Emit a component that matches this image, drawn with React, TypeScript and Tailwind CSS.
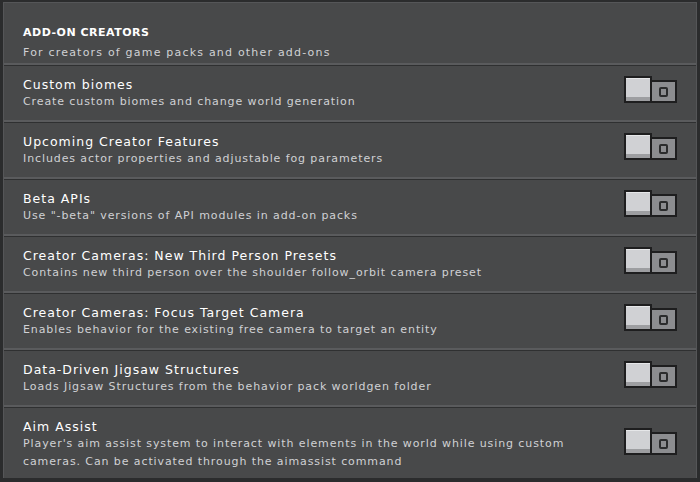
import React from "react";

interface Setting {
  title: string;
  desc: string[];
}

const SETTINGS: Setting[] = [
  { title: "Custom biomes", desc: ["Create custom biomes and change world generation"] },
  { title: "Upcoming Creator Features", desc: ["Includes actor properties and adjustable fog parameters"] },
  { title: "Beta APIs", desc: ['Use "-beta" versions of API modules in add-on packs'] },
  {
    title: "Creator Cameras: New Third Person Presets",
    desc: ["Contains new third person over the shoulder follow_orbit camera preset"],
  },
  {
    title: "Creator Cameras: Focus Target Camera",
    desc: ["Enables behavior for the existing free camera to target an entity"],
  },
  {
    title: "Data-Driven Jigsaw Structures",
    desc: ["Loads Jigsaw Structures from the behavior pack worldgen folder"],
  },
  {
    title: "Aim Assist",
    desc: [
      "Player's aim assist system to interact with elements in the world while using custom",
      "cameras. Can be activated through the aimassist command",
    ],
  },
];

function Toggle({ className }: { className: string }) {
  return (
    <div className={`flex items-start shrink-0 ${className}`}>
      {/* knob */}
      <div className="w-[28px] h-[27px] bg-[#1e1e1f] p-[2px]">
        <div className="w-full h-full bg-[#d0d1d4] border-t border-[#e6e7e9] border-b-[4px] border-b-[#9d9ea1]" />
      </div>
      {/* track */}
      <div className="w-[25px] h-[23px] mt-[4px] bg-[#1e1e1f] pt-[2px] pr-[2px] pb-[2px]">
        <div className="w-full h-full bg-[#8c8d90] flex items-center justify-center">
          <div className="w-[9px] h-[10px] border-2 border-[#2b2c2d] rounded-[2px]" />
        </div>
      </div>
    </div>
  );
}

function Divider() {
  return (
    <div>
      <div className="h-[2px] bg-[#5a5b5d]" />
      <div className="h-[1px] bg-[#2f3031]" />
    </div>
  );
}

export default function App() {
  return (
    <div
      className="w-[700px] h-[482px] bg-[#2b2c2d] pl-[3px] pr-[3px] pt-[2px] pb-[4px] overflow-hidden"
      style={{ fontFamily: '"DejaVu Sans", "Noto Sans", sans-serif' }}
    >
      <div className="h-full bg-[#48494a] border-l border-t border-r border-[#555658] flex flex-col">
        {/* Header */}
        <div className="h-[62px] px-[19px] pt-[23px]">
          <div className="text-[11px] leading-[14px] font-bold text-white tracking-[0.5px]">
            ADD-ON CREATORS
          </div>
          <div className="mt-[6px] text-[11px] leading-[14px] text-[#d0d1d4] tracking-[1.2px]">
            For creators of game packs and other add-ons
          </div>
        </div>

        {SETTINGS.map((s, i) => {
          const last = i === SETTINGS.length - 1;
          return (
            <div key={s.title}>
              <Divider />
              <div
                className={`flex items-start justify-between px-[19px] pt-[11px] ${
                  last ? "h-[70px]" : "h-[54px]"
                }`}
              >
                <div className="flex flex-col">
                  <div className="text-[12.5px] leading-[16px] text-white tracking-[1px]">
                    {s.title}
                  </div>
                  {s.desc.map((d) => (
                    <div
                      key={d}
                      className="text-[11px] leading-[18px] text-[#d0d1d4] tracking-[0.9px]"
                    >
                      {d}
                    </div>
                  ))}
                </div>
                <Toggle className={last ? "mt-[9px]" : "-mt-[1px]"} />
              </div>
            </div>
          );
        })}
      </div>
    </div>
  );
}
